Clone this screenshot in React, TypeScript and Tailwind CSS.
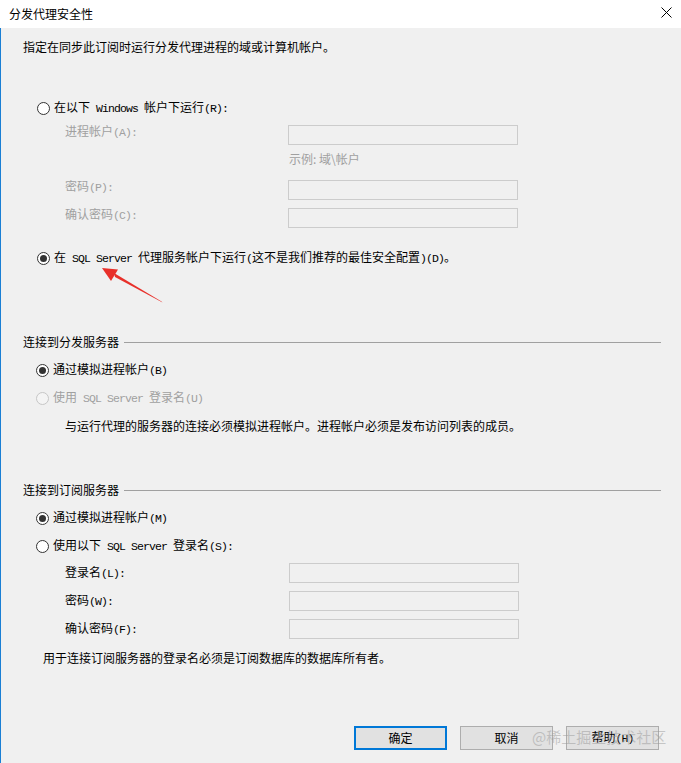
import React from "react";

const MONO = "font-['Liberation_Mono',monospace] text-[11.5px] tracking-[-0.9px]";

function T({ s }: { s: string }) {
  const parts = s.split(/([\x20-\x7e]+)/).filter((p) => p.length > 0);
  return (
    <span className="whitespace-pre">
      {parts.map((p, i) =>
        /^[\x20-\x7e]+$/.test(p) ? (
          <span key={i} className={MONO}>
            {p}
          </span>
        ) : (
          <span key={i}>{p}</span>
        )
      )}
    </span>
  );
}

function Radio({ checked, disabled }: { checked?: boolean; disabled?: boolean }) {
  return (
    <span
      className={
        "w-[13px] h-[13px] rounded-full border flex items-center justify-center shrink-0 " +
        (disabled ? "border-[#c6c6c6] bg-[#f4f4f4]" : "border-[#333333] bg-white")
      }
    >
      {checked && <span className="w-[7px] h-[7px] rounded-full bg-[#333333]" />}
    </span>
  );
}

function RadioRow({
  label,
  checked,
  disabled,
  ml,
  mt,
}: {
  label: string;
  checked?: boolean;
  disabled?: boolean;
  ml: string;
  mt: string;
}) {
  return (
    <div className={"h-[18px] flex items-center gap-[4px] " + ml + " " + mt}>
      <Radio checked={checked} disabled={disabled} />
      <span className={disabled ? "text-[#a0a0a0]" : "text-black"}>
        <T s={label} />
      </span>
    </div>
  );
}

function Box() {
  return <div className="w-[230px] h-[20px] border border-[#cccccc] bg-[#f0f0f0]" />;
}

function FieldRow({
  label,
  disabled,
  mt,
}: {
  label: string;
  disabled?: boolean;
  mt: string;
}) {
  return (
    <div className={"h-[20px] flex items-center ml-[42px] " + mt}>
      <div
        className={
          disabled ? "w-[223px] text-[#a0a0a0] mb-[6px] leading-[14px]" : "w-[224px] text-black leading-[14px]"
        }
      >
        <T s={label} />
      </div>
      <Box />
    </div>
  );
}

function GroupHeader({ title, mt }: { title: string; mt: string }) {
  return (
    <div className={"h-[18px] flex items-center " + mt}>
      <span className="text-black">{title}</span>
      <div className="flex-1 h-px bg-[#a0a0a0] ml-[5px]" />
    </div>
  );
}

function Button({ label, primary }: { label: string; primary?: boolean }) {
  return (
    <div
      className={
        "w-[93px] h-[24px] flex items-center justify-center bg-[#e1e1e1] text-black " +
        (primary ? "border-2 border-[#0078d7]" : "border border-[#adadad]")
      }
    >
      <T s={label} />
    </div>
  );
}

export default function App() {
  return (
    <div className="relative w-[681px] h-[763px] overflow-hidden bg-[#f0f0f0] font-['Noto_Sans_CJK_SC','Noto_Sans',sans-serif] text-[12px] leading-[18px] text-black">
      {/* title bar */}
      <div className="h-[28px] bg-white flex items-center justify-between pl-[9px] pr-[9px]">
        <span className="text-[12px]">分发代理安全性</span>
        <svg width="11" height="11" viewBox="0 0 11 11" className="mt-[-3px]">
          <path d="M0.5 0.5 L10.5 10.5 M10.5 0.5 L0.5 10.5" stroke="#000" strokeWidth="1" />
        </svg>
      </div>

      {/* body */}
      <div className="h-[735px] border-l border-[#1a7fd4] pl-[22px] pr-[20px] flex flex-col">
        <div className="h-[18px] flex items-center mt-[10px]">指定在同步此订阅时运行分发代理进程的域或计算机帐户。</div>

        <RadioRow label="在以下 Windows 帐户下运行(R):" ml="ml-[14px]" mt="mt-[43px]" />
        <FieldRow label="进程帐户(A):" disabled mt="mt-[8px]" />
        <div className="h-[14px] leading-[14px] ml-[266px] mt-[7px] text-[#a0a0a0]">
          示例: 域\帐户
        </div>
        <FieldRow label="密码(P):" disabled mt="mt-[14px]" />
        <FieldRow label="确认密码(C):" disabled mt="mt-[8px]" />
        <RadioRow
          label="在 SQL Server 代理服务帐户下运行(这不是我们推荐的最佳安全配置)(D)。"
          checked
          ml="ml-[14px]"
          mt="mt-[21px]"
        />

        <GroupHeader title="连接到分发服务器" mt="mt-[66px]" />
        <RadioRow label="通过模拟进程帐户(B)" checked ml="ml-[13px]" mt="mt-[10px]" />
        <RadioRow label="使用 SQL Server 登录名(U)" disabled ml="ml-[13px]" mt="mt-[10px]" />
        <div className="h-[18px] flex items-center ml-[42px] mt-[10px]">
          与运行代理的服务器的连接必须模拟进程帐户。进程帐户必须是发布访问列表的成员。
        </div>

        <GroupHeader title="连接到订阅服务器" mt="mt-[46px]" />
        <RadioRow label="通过模拟进程帐户(M)" checked ml="ml-[13px]" mt="mt-[10px]" />
        <RadioRow label="使用以下 SQL Server 登录名(S):" ml="ml-[13px]" mt="mt-[10px]" />
        <FieldRow label="登录名(L):" mt="mt-[8px]" />
        <FieldRow label="密码(W):" mt="mt-[8px]" />
        <FieldRow label="确认密码(F):" mt="mt-[8px]" />
        <div className="h-[18px] flex items-center ml-[20px] mt-[10px]">
          用于连接订阅服务器的登录名必须是订阅数据库的数据库所有者。
        </div>

        <div className="flex justify-end gap-[13px] mt-[59px] pr-[2px]">
          <Button label="确定" primary />
          <Button label="取消" />
          <Button label="帮助(H)" />
        </div>
      </div>

      {/* watermark */}
      <div className="absolute left-[532px] top-[727px] text-[15px] leading-[20px] text-[#9a9a9a]/50 pointer-events-none">
        @稀土掘金技术社区
      </div>

      {/* red annotation arrow */}
      <svg className="absolute left-0 top-0 pointer-events-none" width="681" height="763">
        <polygon points="162.5,302.5 161.5,301.5 114,273 115,277" fill="#e8302a" />
        <polygon points="102,268 118,269.5 111,281" fill="#e8302a" />
      </svg>
    </div>
  );
}
